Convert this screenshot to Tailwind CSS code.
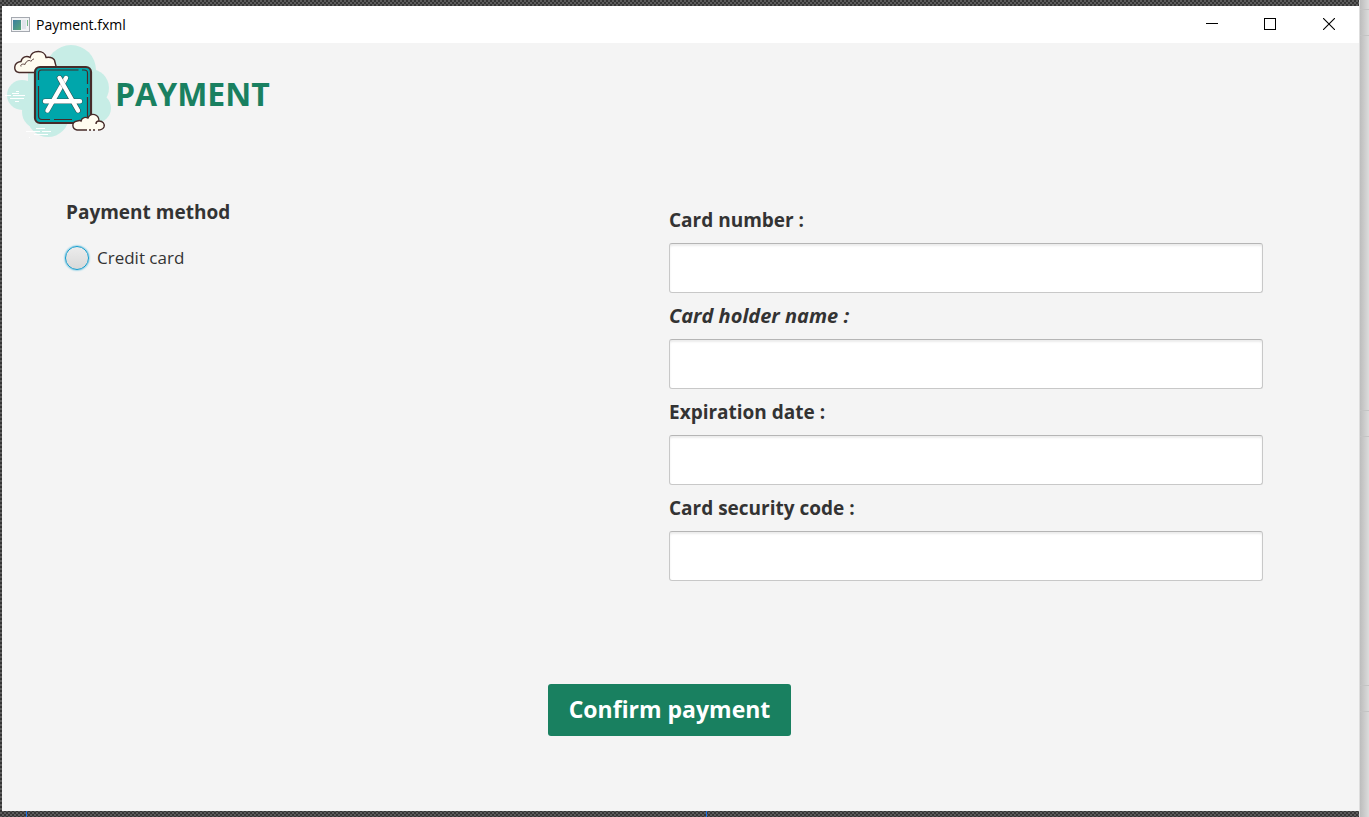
<!DOCTYPE html>
<html lang="en">
<head>
<meta charset="utf-8">
<meta name="viewport" content="width=device-width, initial-scale=1">
<title>Payment.fxml</title>
<script src="https://cdn.jsdelivr.net/npm/@tailwindcss/browser@4"></script>
</head>
<body class="flex h-screen overflow-hidden bg-[#d9d9d9] font-['Open_Sans','Noto_Sans',sans-serif] text-[#333333]">
  <div class="relative flex min-w-0 flex-1 flex-col bg-[#3c3c3c] bg-[repeating-conic-gradient(#353535_0_25%,#5c5c5c_0_50%)] bg-[length:4px_4px] pt-[6px] pb-[6px] pl-[2px]">
    <header class="flex h-[37px] shrink-0 items-center bg-white pl-[9px] text-black">
      <svg class="mr-[6px] h-[16px] w-[19px]" viewBox="0 0 19 16" aria-hidden="true">
        <defs><linearGradient id="pane" x1="0" y1="0" x2="1" y2="1"><stop offset="0" stop-color="#3b7fa0"/><stop offset="1" stop-color="#58a878"/></linearGradient></defs>
        <rect x=".5" y=".5" width="18" height="14" fill="#f2f3f5" stroke="#a5a9b0"/>
        <rect x="2" y="3" width="8" height="10" fill="url(#pane)"/>
        <rect x="11" y="3" width="4" height="9" fill="#dfe3ea"/>
        <rect x="16" y="3" width="1" height="6" fill="#74b88a"/>
      </svg>
      <h1 class="text-[14px] leading-[20px]">Payment.fxml</h1>
      <div class="ml-auto flex h-full pb-px">
        <button class="grid w-[58px] place-items-center" aria-label="Minimize"><svg class="h-[12px] w-[12px]" viewBox="0 0 12 12" shape-rendering="crispEdges"><path d="M0 5.5h12" stroke="#000"/></svg></button>
        <button class="grid w-[58px] place-items-center" aria-label="Maximize"><svg class="h-[12px] w-[12px]" viewBox="0 0 12 12" shape-rendering="crispEdges"><rect x=".5" y=".5" width="11" height="11" fill="none" stroke="#000"/></svg></button>
        <button class="grid w-[60px] place-items-center" aria-label="Close"><svg class="h-[12px] w-[12px]" viewBox="0 0 12 12"><path d="M0 0l12 12M12 0L0 12" stroke="#000" stroke-width="1.1"/></svg></button>
      </div>
    </header>
    <main class="flex flex-1 flex-col bg-[#f4f4f4]">
      <div class="flex h-[104px] items-center gap-[3px] pl-[3px]">
        <svg class="h-[104px] w-[107px] shrink-0" viewBox="5 43 107 104" aria-hidden="true">
          <g fill="#c7ede6">
            <circle cx="71" cy="70" r="25"/><circle cx="90" cy="88" r="19"/><circle cx="96" cy="108" r="15"/>
            <circle cx="22" cy="95" r="15"/><circle cx="39" cy="112" r="17"/><circle cx="48" cy="116" r="21"/><rect x="28" y="72" width="65" height="50"/>
          </g>
          <g stroke="#fff" stroke-width="1" fill="none"><path d="M4 95.500h7M13 95.500h12M10 98.500h14M16 91.500h3M12 93.500h7M15 101.500h4M26 131.500h14M42 131.500h9M36 128.500h9M34 134.500h14M29 137.500h1"/></g>
          <path d="M19 72.500c-6-1-6-10 2-11 1-5 6-6 9-4 2-8 15-8 16 0 5-1 9 1 9 5l2 7v3z" fill="#fffcf0" stroke="#472b29" stroke-width="1.400"/>
          <path d="M21 66.500c-1-2 2-3 4-2 1-4 5-5 6-3M31 61c1-1 2-2 3-2" fill="none" stroke="#472b29" stroke-width=".9"/>
          <rect x="35" y="67" width="56" height="56" rx="5" fill="#00a6ab" stroke="#472b29" stroke-width="2.200"/>
          <path d="M38.500 80V73q0-3 3-3h37M82 70h2q3.500 0 3.500 3v11M87.500 88v6M87.500 97v20M38.500 86v30q0 3.500 3.500 3.500h8M54 119.500h18" fill="none" stroke="#472b29" stroke-width="1.200"/>
          <g fill="none" stroke-linecap="round">
            <path d="M66 78L47.500 110.500M59.500 78L78 110.500M45 101.300h35" stroke="#472b29" stroke-opacity=".55" stroke-width="5.400"/>
            <path d="M66 78L47.500 110.500" stroke="#fff" stroke-width="4.400"/>
            <path d="M59.500 78L78 110.500" stroke="#472b29" stroke-opacity=".4" stroke-width="5.400"/>
            <path d="M59.500 78L78 110.500M45 101.300h35" stroke="#fff" stroke-width="4.400"/>
          </g>
          <path d="M77 130c-5-1-6-8 0-9 3-1 4 0 4 0 1-4 5-4 7-3 3-6 11-4 11 3 3-1 6 3 5 6s-3 3-6 3z" fill="#fffcf0"/>
          <path d="M87 130H77c-5-1-6-8 0-9 3-1 4 0 4 0 1-4 5-4 7-3 3-6 11-4 11 3-2 0-3 1-3 3M99 121c4 0 6 3 5 6-1 2-3 3-6 3M89 130h2M93 130h2" fill="none" stroke="#472b29" stroke-width="1.400"/>
        </svg>
        <h2 class="pb-[2px] text-[32px] leading-[44px] font-bold text-[#198060]">PAYMENT</h2>
      </div>
      <form class="flex flex-1 flex-col" onsubmit="return false">
        <div class="flex pt-[52px] pr-[96px] pl-[64px]">
          <fieldset class="w-[603px] shrink-0">
            <legend class="text-[19px] leading-[26px] font-bold">Payment method</legend>
            <label class="-ml-px mt-[21px] flex items-center gap-[8px] text-[17px] leading-[24px]">
              <input type="radio" name="method" class="h-[24px] w-[24px] appearance-none rounded-full border border-[#0f9bcd] bg-linear-to-b from-[#ececec] to-[#d9d9d9] shadow-[0_0_2px_#039ed3] checked:border-[7px]">
              Credit card
            </label>
          </fieldset>
          <div class="flex min-w-0 flex-1 flex-col pt-[8px] text-[19px] leading-[26px] font-bold">
            <label for="number">Card number :</label>
            <input id="number" type="text" class="mt-[10px] mb-[10px] h-[50px] w-full rounded-[3px] border border-[#c8c8c8] border-t-[#b5b5b5] bg-white px-3 font-normal shadow-[inset_0_2px_2px_#ececec]">
            <label for="holder" class="text-[20px] leading-[26px] italic">Card holder name :</label>
            <input id="holder" type="text" class="mt-[10px] mb-[10px] h-[50px] w-full rounded-[3px] border border-[#c8c8c8] border-t-[#b5b5b5] bg-white px-3 font-normal shadow-[inset_0_2px_2px_#ececec]">
            <label for="expiry">Expiration date :</label>
            <input id="expiry" type="text" class="mt-[10px] mb-[10px] h-[50px] w-full rounded-[3px] border border-[#c8c8c8] border-t-[#b5b5b5] bg-white px-3 font-normal shadow-[inset_0_2px_2px_#ececec]">
            <label for="code">Card security code :</label>
            <input id="code" type="text" class="mt-[10px] h-[50px] w-full rounded-[3px] border border-[#c8c8c8] border-t-[#b5b5b5] bg-white px-3 font-normal shadow-[inset_0_2px_2px_#ececec]">
          </div>
        </div>
        <div class="flex justify-center pt-[103px] pr-[22px]">
          <button type="submit" class="h-[52px] rounded-[3px] bg-[#198060] px-[21px] pb-[2px] text-[23px] leading-[32px] font-bold whitespace-nowrap text-white">Confirm payment</button>
        </div>
      </form>
    </main>
    <span class="absolute bottom-0 left-[26px] h-[6px] w-px bg-[#1a73e8]"></span>
    <span class="absolute bottom-0 left-[706px] h-[6px] w-px bg-[#1a73e8]"></span>
  </div>
  <aside class="w-[10px] shrink-0 border-l border-[#dedede] bg-linear-to-r from-[#bdbdbd] to-[#dcdcdc]" aria-hidden="true">
    <div class="h-[36px] border-b border-[#c4c4c4] pt-[9px]"><div class="h-px bg-[#c4c4c4]"></div></div>
    <div class="mt-[374px] h-[27px] border-y border-[#c4c4c4]"></div>
    <div class="mt-[248px] h-[27px] border-y border-[#c4c4c4]"></div>
  </aside>
</body>
</html>
